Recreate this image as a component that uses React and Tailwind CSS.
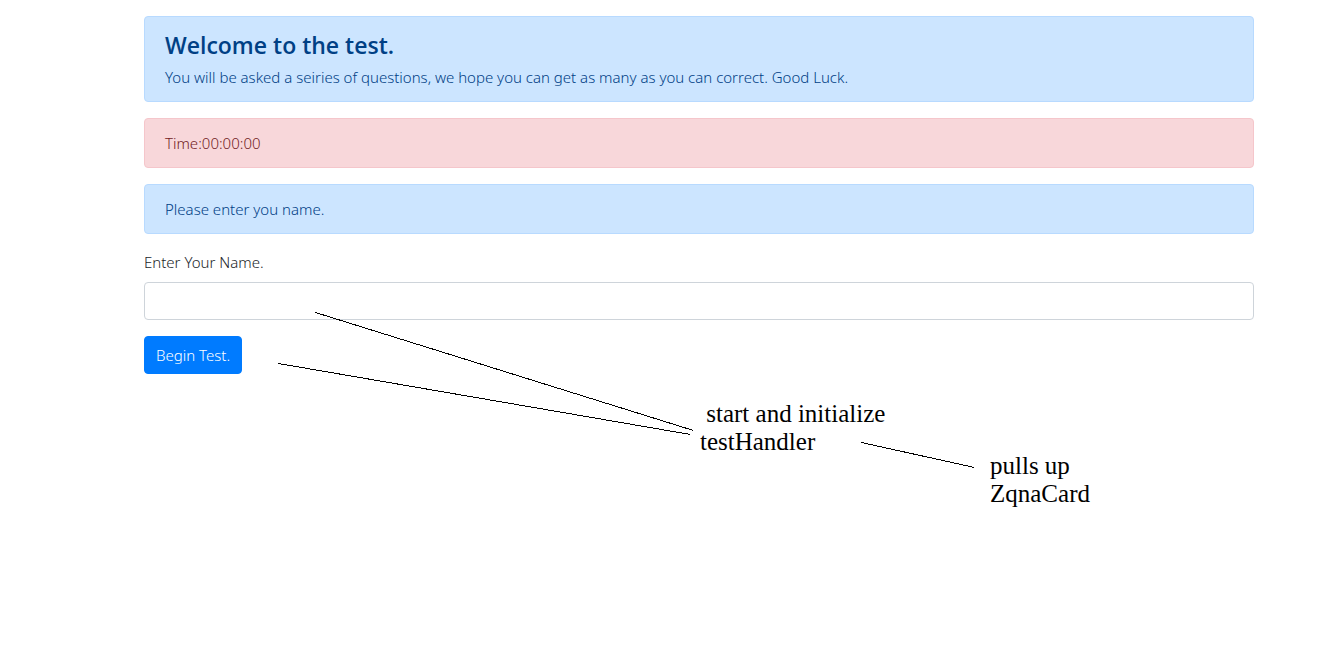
const alertBase = 'rounded border px-5 py-3'
const blueAlert = 'border-[#b8daff] bg-[#cce5ff] text-[#004085]'
const redAlert = 'border-[#f5c6cb] bg-[#f8d7da] text-[#721c24]'

function Alert({ tone, children }) {
  return <div className={`${alertBase} ${tone}`}>{children}</div>
}

function Annotations() {
  return (
    <>
      <svg
        className="pointer-events-none absolute top-0 left-0 h-[520px] w-[1100px]"
        viewBox="0 0 1100 520"
        stroke="#000"
        strokeWidth="1"
        shapeRendering="crispEdges"
        aria-hidden="true"
      >
        <path d="M315.5 312.5 693.5 430.5M278.5 363.5 690.5 434.5M861.5 442.5 974.5 467.5" fill="none" />
      </svg>
      <p className="absolute top-[400px] left-[700px] font-['Liberation_Serif',serif] text-[25px] leading-7 whitespace-pre text-black">
        {' start and initialize\ntestHandler'}
      </p>
      <p className="absolute top-[452px] left-[990px] font-['Liberation_Serif',serif] text-[25px] leading-7 whitespace-pre text-black">
        {'pulls up\nZqnaCard'}
      </p>
    </>
  )
}

export default function App() {
  return (
    <div className="relative min-h-screen bg-white font-['Noto_Sans','Open_Sans',sans-serif] text-[15px] leading-6 font-light text-[#212529]">
      <main className="flex flex-col gap-4 pt-4 pr-22 pl-36">
        <Alert tone={blueAlert}>
          <h1 className="mb-1 font-['Open_Sans','Noto_Sans',sans-serif] text-[23px] leading-8 font-semibold">
            Welcome to the test.
          </h1>
          <p>You will be asked a seiries of questions, we hope you can get as many as you can correct. Good Luck.</p>
        </Alert>
        <Alert tone={redAlert}>Time:00:00:00</Alert>
        <Alert tone={blueAlert}>Please enter you name.</Alert>
        <form className="flex flex-col items-start gap-4" onSubmit={(e) => e.preventDefault()}>
          <div className="flex w-full flex-col gap-2">
            <label htmlFor="name">Enter Your Name.</label>
            <input
              id="name"
              type="text"
              className="h-[38px] w-full rounded border border-[#ced4da] bg-white px-3 text-[#495057]"
            />
          </div>
          <button type="submit" className="rounded border border-[#007bff] bg-[#007bff] px-[11px] py-[6px] text-white">
            Begin Test.
          </button>
        </form>
      </main>
      <Annotations />
    </div>
  )
}
